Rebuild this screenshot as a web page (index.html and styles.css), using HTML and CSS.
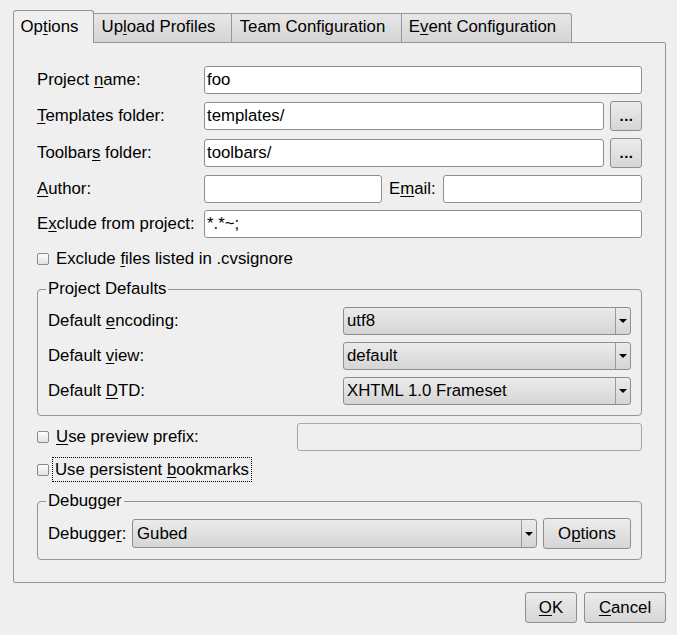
FILE: index.html
```html
<!DOCTYPE html>
<html>
<head>
<meta charset="utf-8">
<link rel="stylesheet" href="styles.css">
</head>
<body>
<div class="dialog">
  <div class="tabs">
    <div class="tab active t1">Op<u>t</u>ions</div>
    <div class="tab t2">Up<u>l</u>oad Profiles</div>
    <div class="tab t3">Team Configuration</div>
    <div class="tab t4 last">E<u>v</u>ent Configuration</div>
  </div>
  <div class="panel">
    <div class="rows">
      <div class="row">
        <span class="lbl">Project <u>n</u>ame:</span>
        <div class="field grow">foo</div>
      </div>
      <div class="row tall">
        <span class="lbl"><u>T</u>emplates folder:</span>
        <div class="field grow">templates/</div>
        <div class="btn dots">...</div>
      </div>
      <div class="row tall">
        <span class="lbl">Toolbar<u>s</u> folder:</span>
        <div class="field grow">toolbars/</div>
        <div class="btn dots">...</div>
      </div>
      <div class="row">
        <span class="lbl"><u>A</u>uthor:</span>
        <div class="field author"></div>
        <span class="email-lbl">E<u>m</u>ail:</span>
        <div class="field grow"></div>
      </div>
      <div class="row">
        <span class="lbl">E<u>x</u>clude from project:</span>
        <div class="field grow">*.*~;</div>
      </div>
    </div>

    <div class="check-row cvs">
      <span class="cb"></span>
      <span>Exclude <u>f</u>iles listed in .cvsignore</span>
    </div>

    <fieldset class="group defaults">
      <legend>Project Defaults</legend>
      <div class="group-grid">
        <span>Default <u>e</u>ncoding:</span>
        <div class="combo"><span class="combo-text">utf8</span><span class="arrow"><i></i></span></div>
        <span>Default <u>v</u>iew:</span>
        <div class="combo"><span class="combo-text">default</span><span class="arrow"><i></i></span></div>
        <span>Default <u>D</u>TD:</span>
        <div class="combo"><span class="combo-text">XHTML 1.0 Frameset</span><span class="arrow"><i></i></span></div>
      </div>
    </fieldset>

    <div class="preview-row">
      <div class="check-row prefix">
        <span class="cb"></span>
        <span><u>U</u>se preview prefix:</span>
      </div>
      <div class="field grow disabled"></div>
    </div>

    <div class="check-row bookmarks">
      <span class="cb"></span>
      <span class="focus">Use persistent <u>b</u>ookmarks</span>
    </div>

    <fieldset class="group debugger">
      <legend>Debugger</legend>
      <div class="dbg-row">
        <span class="dbg-lbl">Debugge<u>r</u>:</span>
        <div class="combo dbg-combo"><span class="combo-text">Gubed</span><span class="arrow"><i></i></span></div>
        <div class="btn opts">O<u>p</u>tions</div>
      </div>
    </fieldset>
  </div>
  <div class="buttons">
    <div class="btn ok"><u>O</u>K</div>
    <div class="btn cancel"><u>C</u>ancel</div>
  </div>
</div>
</body>
</html>
```

FILE: styles.css
```css
* { box-sizing: border-box; }
html, body {
  margin: 0;
  padding: 0;
  background: #efefef;
}
body {
  font-family: "Liberation Sans", Arial, sans-serif;
  font-size: 16.8px;
  color: #000;
  width: 677px;
  height: 635px;
  overflow: hidden;
}
u { text-decoration: underline; text-underline-offset: 2px; text-decoration-thickness: 1px; }

.dialog {
  padding: 10px 0 0 13px;
}

/* Tabs */
.tabs {
  display: flex;
  align-items: flex-end;
  margin-bottom: -1px;
  position: relative;
  z-index: 1;
  height: 33px;
}
.tab {
  height: 30px;
  line-height: 26px;
  padding: 0 8px 2px 0;
  text-align: center;
  white-space: nowrap;
  border-top: 1px solid #959595;
  border-right: 1px solid #959595;
  border-bottom: 1px solid #959595;
  background: linear-gradient(#e7e7e7, #d4d4d4);
}
.tab.active {
  height: 33px;
  padding: 3px 8px 3px 0;
  background: #efefef;
  border-left: 1px solid #959595;
  border-bottom: none;
  border-radius: 3px 3px 0 0;
}
.tab.last { border-radius: 0 3px 0 0; }
.t1 { width: 81px; }
.t2 { width: 138px; }
.t3 { width: 170px; }
.t4 { width: 170px; }

/* Panel */
.panel {
  width: 653px;
  height: 541px;
  border: 1px solid #959595;
  border-radius: 0 2px 2px 2px;
  padding: 23px 23px 0 23px;
}

.rows {
  display: flex;
  flex-direction: column;
  gap: 7px;
}
.row {
  display: flex;
  align-items: center;
  height: 28px;
}
.row.tall { height: 30px; }
.lbl {
  width: 167px;
  flex: none;
  white-space: nowrap;
}
.field {
  height: 28px;
  line-height: 26px;
  background: #fff;
  border: 1px solid #8e8e8e;
  border-radius: 3px;
  padding: 0 2px;
  white-space: nowrap;
}
.field.grow { flex: 1; }
.field.author { width: 178px; flex: none; }
.field.disabled { background: #efefef; border-color: #a8a8a8; }
.email-lbl { margin-left: 7px; width: 54px; flex: none; }

.btn {
  border: 1px solid #8e8e8e;
  border-radius: 3px;
  background: linear-gradient(#ececec, #d6d6d6);
  text-align: center;
  white-space: nowrap;
}
.dots {
  width: 32px;
  height: 30px;
  margin-left: 6px;
  font-size: 15px;
  font-weight: bold;
  letter-spacing: 0.5px;
  line-height: 28px;
  padding-left: 1px;
}

/* Checkbox rows */
.check-row {
  display: flex;
  align-items: center;
  white-space: nowrap;
}
.cb {
  width: 12px;
  height: 12px;
  flex: none;
  border: 1px solid #8a8a8a;
  border-radius: 2px;
  background: linear-gradient(#fdfdfd, #e2e2e2);
  margin-right: 7px;
}
.check-row.cvs {
  margin-top: 11px;
  height: 20px;
}

/* Group boxes */
.group {
  margin: 0;
  border: 1px solid #959595;
  border-radius: 4px;
  padding: 9px 10px 10px 10px;
  min-width: 0;
}
.group legend {
  padding: 0 2px;
  margin-left: -2px;
  line-height: 18px;
  height: 18px;
}
.defaults { margin-top: 11px; }
.group-grid {
  display: grid;
  grid-template-columns: 295px 1fr;
  row-gap: 7px;
  align-items: center;
}

.combo {
  display: flex;
  height: 28px;
  border: 1px solid #8e8e8e;
  border-radius: 3px;
  background: linear-gradient(#ebebeb, #d5d5d5);
}
.combo-text {
  flex: 1;
  line-height: 26px;
  padding-left: 3px;
  white-space: nowrap;
}
.arrow {
  width: 15px;
  flex: none;
  border-left: 1px solid #9a9a9a;
  display: flex;
  align-items: center;
  justify-content: center;
}
.arrow i {
  display: block;
  width: 0;
  height: 0;
  border-left: 4px solid transparent;
  border-right: 4px solid transparent;
  border-top: 4px solid #000;
}

/* Preview row */
.preview-row {
  display: flex;
  align-items: center;
  margin-top: 7px;
  height: 28px;
}
.check-row.prefix { width: 260px; flex: none; }

.check-row.bookmarks {
  margin-top: 6px;
  height: 25px;
}
.bookmarks .cb { margin-right: 3px; }
.focus {
  border: 1px dotted #000;
  height: 25px;
  line-height: 23px;
  padding: 0 2px;
}

.debugger { margin-top: 10px; padding-top: 8px; }
.dbg-row {
  display: flex;
  align-items: center;
  height: 31px;
}
.dbg-lbl { width: 84px; flex: none; }
.dbg-combo { flex: 1; height: 29px; }
.dbg-combo .combo-text { padding-left: 4px; line-height: 27px; }
.opts {
  width: 88px;
  height: 31px;
  line-height: 29px;
  margin-left: 6px;
}

/* Bottom buttons */
.buttons {
  width: 653px;
  display: flex;
  justify-content: flex-end;
  gap: 7px;
  margin-top: 9px;
}
.buttons .btn {
  height: 31px;
  line-height: 29px;
}
.ok { width: 52px; }
.cancel { width: 82px; }
```
